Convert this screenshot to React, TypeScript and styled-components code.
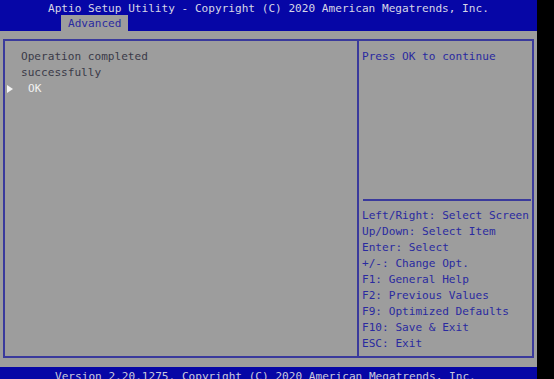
import styled, { createGlobalStyle } from 'styled-components';

const GlobalStyle = createGlobalStyle`
    html, body {
        margin: 0;
        padding: 0;
        background: #000;
        overflow: hidden;
    }
`;

const Screen = styled.div`
    width: 537px;
    height: 379px;
    display: flex;
    flex-direction: column;
    background: #9d9d9d;
    font-family: "DejaVu Sans Mono", "Liberation Mono", monospace;
    font-size: 11.1px;
    line-height: 16px;
    overflow: hidden;
`;

const TopBar = styled.div`
    background: #0606a6;
    height: 31px;
    display: flex;
    flex-direction: column;
`;

const Title = styled.div`
    color: #d6d6e6;
    padding-left: 48px;
    height: 15px;
    line-height: 17px;
`;

const TabRow = styled.div`
    display: flex;
    padding-left: 61px;
`;

const Tab = styled.div`
    background: #9d9d9d;
    color: #2a2aa0;
    padding: 0 7px;
    height: 16px;
    line-height: 17px;
`;

const Main = styled.div`
    flex: 1;
    padding: 8px 3px 9px 3px;
    display: flex;
`;

const Frame = styled.div`
    flex: 1;
    display: flex;
    border: 2px solid #3a3a9c;
`;

const LeftPanel = styled.div`
    width: 352px;
    padding-top: 8px;
    border-right: 2px solid #3a3a9c;
    display: flex;
    flex-direction: column;
`;

const Message = styled.div`
    color: #3a3a48;
    padding-left: 16px;
`;

const Item = styled.div`
    display: flex;
    align-items: center;
    height: 16px;
    color: #f2f2f2;
`;

const Pointer = styled.span`
    width: 0;
    height: 0;
    margin-left: 2px;
    border-top: 4px solid transparent;
    border-bottom: 4px solid transparent;
    border-left: 6px solid #f4f4f4;
`;

const ItemLabel = styled.span`
    margin-left: 15px;
`;

const RightPanel = styled.div`
    flex: 1;
    display: flex;
    flex-direction: column;
    padding-left: 3px;
    padding-right: 1px;
`;

const Description = styled.div`
    flex: 1;
    padding-top: 8px;
    color: #2a2aa0;
`;

const Rule = styled.div`
    height: 2px;
    background: #3a3a9c;
    margin-left: 1px;
`;

const HelpList = styled.div`
    padding-top: 7px;
    padding-bottom: 4px;
    color: #2a2aa0;
    white-space: pre;
`;

const BottomBar = styled.div`
    background: #0606a6;
    height: 12px;
    color: #c8c8dc;
    padding-left: 55px;
    line-height: 19px;
    overflow: hidden;
    white-space: pre;
`;

const helpLines = [
    'Left/Right: Select Screen',
    'Up/Down: Select Item',
    'Enter: Select',
    '+/-: Change Opt.',
    'F1: General Help',
    'F2: Previous Values',
    'F9: Optimized Defaults',
    'F10: Save & Exit',
    'ESC: Exit',
];

function App() {
    return (
        <>
            <GlobalStyle />
            <Screen>
                <TopBar>
                    <Title>Aptio Setup Utility - Copyright (C) 2020 American Megatrends, Inc.</Title>
                    <TabRow>
                        <Tab>Advanced</Tab>
                    </TabRow>
                </TopBar>
                <Main>
                    <Frame>
                        <LeftPanel>
                            <Message>Operation completed</Message>
                            <Message>successfully</Message>
                            <Item>
                                <Pointer />
                                <ItemLabel>OK</ItemLabel>
                            </Item>
                        </LeftPanel>
                        <RightPanel>
                            <Description>Press OK to continue</Description>
                            <Rule />
                            <HelpList>
                                {helpLines.map((line) => (
                                    <div key={line}>{line}</div>
                                ))}
                            </HelpList>
                        </RightPanel>
                    </Frame>
                </Main>
                <BottomBar>Version 2.20.1275. Copyright (C) 2020 American Megatrends, Inc.</BottomBar>
            </Screen>
        </>
    );
}

export default App;
